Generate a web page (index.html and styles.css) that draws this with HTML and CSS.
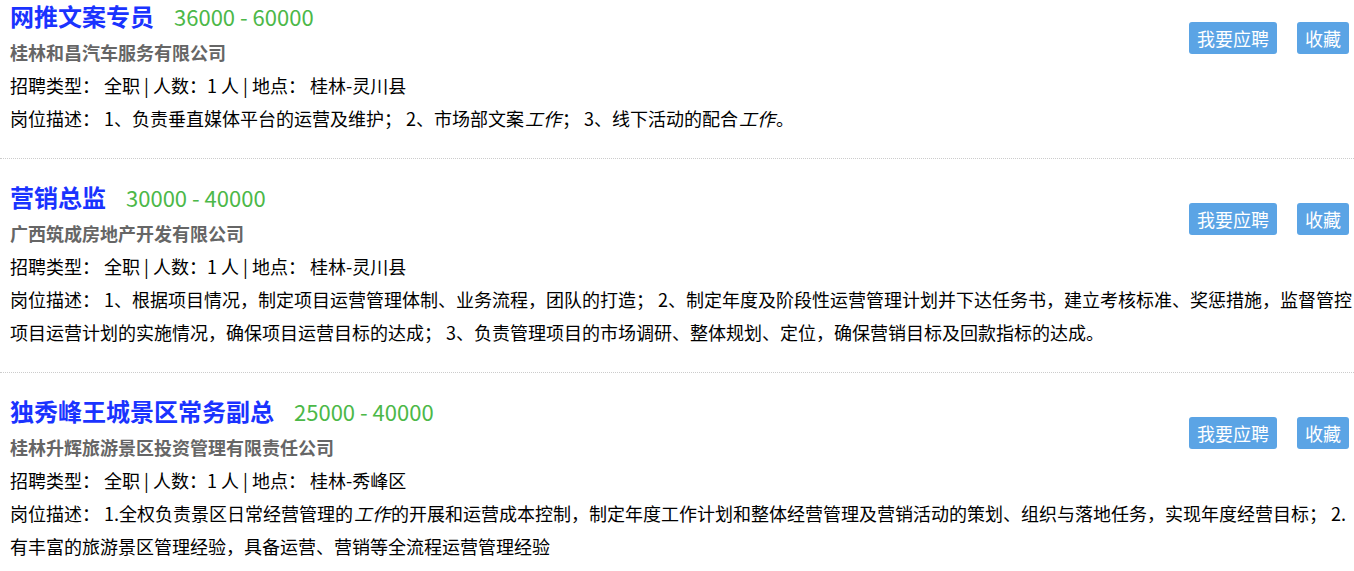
FILE: index.html
```html
<!DOCTYPE html>
<html>
<head>
    <title>招聘信息</title>
    <meta charset="utf-8" />
    <meta name="viewport" content="width=device-width, initial-scale=1.0">
    <link rel="stylesheet" href="styles.css">
</head>
<body>
    <div class="job-list">
        <div class="job-item">
            <div class="job-head">
                <div class="job-info">
                    <div class="job-title">网推文案专员<span class="salary">36000 - 60000</span></div>
                    <div class="company">桂林和昌汽车服务有限公司</div>
                    <div class="line">招聘类型： 全职 | 人数：1 人 | 地点： 桂林-灵川县</div>
                </div>
                <div class="job-actions">
                    <button class="btn">我要应聘</button>
                    <button class="btn">收藏</button>
                </div>
            </div>
            <div class="line">岗位描述： 1、负责垂直媒体平台的运营及维护； 2、市场部文案<em>工作</em>； 3、线下活动的配合<em>工作</em>。</div>
        </div>

        <div class="job-item">
            <div class="job-head">
                <div class="job-info">
                    <div class="job-title">营销总监<span class="salary">30000 - 40000</span></div>
                    <div class="company">广西筑成房地产开发有限公司</div>
                    <div class="line">招聘类型： 全职 | 人数：1 人 | 地点： 桂林-灵川县</div>
                </div>
                <div class="job-actions">
                    <button class="btn">我要应聘</button>
                    <button class="btn">收藏</button>
                </div>
            </div>
            <div class="line">岗位描述： 1、根据项目情况，制定项目运营管理体制、业务流程，团队的打造； 2、制定年度及阶段性运营管理计划并下达任务书，建立考核标准、奖惩措施，监督管控项目运营计划的实施情况，确保项目运营目标的达成； 3、负责管理项目的市场调研、整体规划、定位，确保营销目标及回款指标的达成。</div>
        </div>

        <div class="job-item">
            <div class="job-head">
                <div class="job-info">
                    <div class="job-title">独秀峰王城景区常务副总<span class="salary">25000 - 40000</span></div>
                    <div class="company">桂林升辉旅游景区投资管理有限责任公司</div>
                    <div class="line">招聘类型： 全职 | 人数：1 人 | 地点： 桂林-秀峰区</div>
                </div>
                <div class="job-actions">
                    <button class="btn">我要应聘</button>
                    <button class="btn">收藏</button>
                </div>
            </div>
            <div class="line">岗位描述： 1.全权负责景区日常经营管理的<em>工作</em>的开展和运营成本控制，制定年度工作计划和整体经营管理及营销活动的策划、组织与落地任务，实现年度经营目标； 2.有丰富的旅游景区管理经验，具备运营、营销等全流程运营管理经验</div>
        </div>
    </div>
</body>
</html>
```

FILE: styles.css
```css
body {
    margin: 0;
    background: #fff;
    font-family: "Microsoft YaHei", "Noto Sans CJK SC", sans-serif;
    color: #000;
    overflow: hidden;
}

.job-list {
    margin-top: -22px; /* 列表已向下滚动了一点 */
}

.job-item {
    padding: 18px 0 23px 10px;
    border-bottom: 1px dotted #ccc;
}

.job-head {
    display: flex;
    justify-content: space-between;
    align-items: flex-start;
}

.job-title {
    font-size: 24px;
    font-weight: bold;
    color: #1a33ff;
    line-height: 40px;
}

.salary {
    font-size: 22px;
    font-weight: normal;
    color: #4cb848;
    margin-left: 20px;
}

.company {
    font-size: 18px;
    font-weight: bold;
    color: #666;
    line-height: 33px;
}

.line {
    font-size: 18px;
    line-height: 33px;
}

.line em {
    font-style: italic;
    padding: 0 1px;
}

.job-actions {
    display: flex;
    gap: 20px;
    margin-top: 26px;
    margin-right: 5px;
}

.btn {
    background: #5ba4e5;
    color: #fff;
    border: none;
    border-radius: 3px;
    height: 32px;
    padding: 0 8px;
    font-size: 18px;
    font-family: inherit;
    cursor: pointer;
}
```
